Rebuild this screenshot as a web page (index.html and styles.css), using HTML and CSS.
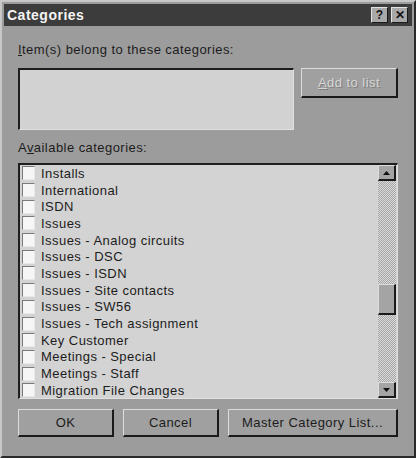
FILE: index.html
```html
<!DOCTYPE html>
<html lang="en">
<head>
    <meta charset="UTF-8">
    <title>Categories</title>
    <link rel="stylesheet" href="styles.css">
</head>
<body>
    <div class="dialog">
        <div class="titlebar">
            <span class="title">Categories</span>
            <div class="title-buttons">
                <span class="cap-btn">?</span>
                <span class="cap-btn">✕</span>
            </div>
        </div>

        <div class="content">
            <div class="label label-top"><u>I</u>tem(s) belong to these categories:</div>
            <div class="top-row">
                <div class="textbox"></div>
                <button class="btn btn-add" disabled><u>A</u>dd to list</button>
            </div>

            <div class="label label-list">A<u>v</u>ailable categories:</div>
            <div class="listbox">
                <ul class="items">
                    <li><span class="check"></span>Installs</li>
                    <li><span class="check"></span>International</li>
                    <li><span class="check"></span>ISDN</li>
                    <li><span class="check"></span>Issues</li>
                    <li><span class="check"></span>Issues - Analog circuits</li>
                    <li><span class="check"></span>Issues - DSC</li>
                    <li><span class="check"></span>Issues - ISDN</li>
                    <li><span class="check"></span>Issues - Site contacts</li>
                    <li><span class="check"></span>Issues - SW56</li>
                    <li><span class="check"></span>Issues - Tech assignment</li>
                    <li><span class="check"></span>Key Customer</li>
                    <li><span class="check"></span>Meetings - Special</li>
                    <li><span class="check"></span>Meetings - Staff</li>
                    <li><span class="check"></span>Migration File Changes</li>
                </ul>
                <div class="scrollbar">
                    <div class="arrow"><svg width="7" height="4" viewBox="0 0 7 4"><path d="M3.5 0 L7 4 L0 4 Z" fill="#111"/></svg></div>
                    <div class="track track-top"></div>
                    <div class="thumb"></div>
                    <div class="track track-bottom"></div>
                    <div class="arrow"><svg width="7" height="4" viewBox="0 0 7 4"><path d="M0 0 L7 0 L3.5 4 Z" fill="#111"/></svg></div>
                </div>
            </div>

            <div class="bottom-row">
                <button class="btn btn-ok">OK</button>
                <button class="btn btn-cancel">Cancel</button>
                <button class="btn btn-master">Master Category List...</button>
            </div>
        </div>
    </div>
</body>
</html>
```

FILE: styles.css
```css
/* Dialog frame */
body {
    margin: 0;
    background-color: #9c9c9c;
    font-family: "Liberation Sans", Arial, sans-serif;
    font-size: 13px;
    letter-spacing: 0.45px;
    color: #1c1c1c;
}
.dialog {
    width: 416px;
    height: 458px;
    box-sizing: border-box;
    padding: 2px;
    border-top: 2px solid #c8c8c8;
    border-left: 2px solid #c8c8c8;
    border-right: 2px solid #2a2a2a;
    border-bottom: 2px solid #2a2a2a;
    background-color: #9c9c9c;
}
.titlebar {
    height: 22px;
    background-color: #3c3c3c;
    display: flex;
    justify-content: space-between;
    align-items: center;
    padding: 0 4px 0 3px;
}
.title {
    color: #f4f4f4;
    font-weight: bold;
    font-size: 14px;
    letter-spacing: 0.5px;
}
.title-buttons {
    display: flex;
    gap: 3px;
}
.cap-btn {
    width: 17px;
    height: 16px;
    box-sizing: border-box;
    background-color: #a8a8a8;
    border-top: 1px solid #e2e2e2;
    border-left: 1px solid #e2e2e2;
    border-right: 1px solid #1a1a1a;
    border-bottom: 1px solid #1a1a1a;
    display: flex;
    align-items: center;
    justify-content: center;
    font-weight: bold;
    font-size: 12px;
    letter-spacing: 0;
    color: #111;
}

/* Content */
.content {
    padding: 0 14px 0 14px;
}
.label {
    height: 14px;
    line-height: 14px;
    white-space: nowrap;
}
.label u {
    text-decoration-thickness: 1px;
}
.label-top {
    margin-top: 17px;
}
.top-row {
    display: flex;
    justify-content: space-between;
    align-items: flex-start;
    margin-top: 11px;
}
.textbox {
    width: 276px;
    height: 62px;
    box-sizing: border-box;
    background-color: #d2d2d2;
    border-top: 2px solid #1e1e1e;
    border-left: 2px solid #1e1e1e;
    border-right: 1px solid #e0e0e0;
    border-bottom: 1px solid #e0e0e0;
}
.btn {
    font-family: "Liberation Sans", Arial, sans-serif;
    font-size: 13px;
    letter-spacing: 0.45px;
    color: #1c1c1c;
    background-color: #a0a0a0;
    box-sizing: border-box;
    border-top: 1px solid #dcdcdc;
    border-left: 1px solid #dcdcdc;
    border-right: 2px solid #1a1a1a;
    border-bottom: 2px solid #1a1a1a;
    padding: 0;
    margin: 0;
}
.btn-add {
    width: 97px;
    height: 30px;
    color: #d6d6d6;
    text-shadow: 1px 1px 0 #7e7e7e;
}
.label-list {
    margin-top: 11px;
}

/* List box */
.listbox {
    margin-top: 8px;
    height: 236px;
    box-sizing: border-box;
    background-color: #d3d3d3;
    border-top: 2px solid #1e1e1e;
    border-left: 2px solid #1e1e1e;
    border-right: 1px solid #e0e0e0;
    border-bottom: 1px solid #e0e0e0;
    display: flex;
    overflow: hidden;
}
.items {
    list-style: none;
    margin: 0;
    padding: 0 0 0 2px;
    flex: 1;
}
.items li {
    height: 16.7px;
    display: flex;
    align-items: center;
    white-space: nowrap;
}
.check {
    width: 13px;
    height: 14px;
    box-sizing: border-box;
    background-color: #f6f6f6;
    border-top: 1px solid #7a7a7a;
    border-left: 1px solid #7a7a7a;
    border-right: 1px solid #e8e8e8;
    border-bottom: 1px solid #e8e8e8;
    margin-right: 6px;
}
.scrollbar {
    width: 18px;
    display: flex;
    flex-direction: column;
    margin-right: 1px;
}
.arrow {
    height: 16px;
    box-sizing: border-box;
    background-color: #a4a4a4;
    border-top: 1px solid #dcdcdc;
    border-left: 1px solid #dcdcdc;
    border-right: 2px solid #1a1a1a;
    border-bottom: 2px solid #1a1a1a;
    display: flex;
    align-items: center;
    justify-content: center;
}
.track {
    background-color: #b6b6b6;
    background-image: repeating-conic-gradient(#dadada 0 25%, #a6a6a6 0 50%);
    background-size: 2px 2px;
}
.track-top {
    height: 103px;
}
.track-bottom {
    flex: 1;
}
.thumb {
    height: 31px;
    box-sizing: border-box;
    background-color: #a4a4a4;
    border-top: 1px solid #dcdcdc;
    border-left: 1px solid #dcdcdc;
    border-right: 2px solid #1a1a1a;
    border-bottom: 2px solid #1a1a1a;
}

/* Bottom buttons */
.bottom-row {
    display: flex;
    gap: 9px;
    margin-top: 10px;
}
.btn-ok, .btn-cancel {
    width: 96px;
    height: 28px;
}
.btn-master {
    flex: 1;
    height: 28px;
}
```
